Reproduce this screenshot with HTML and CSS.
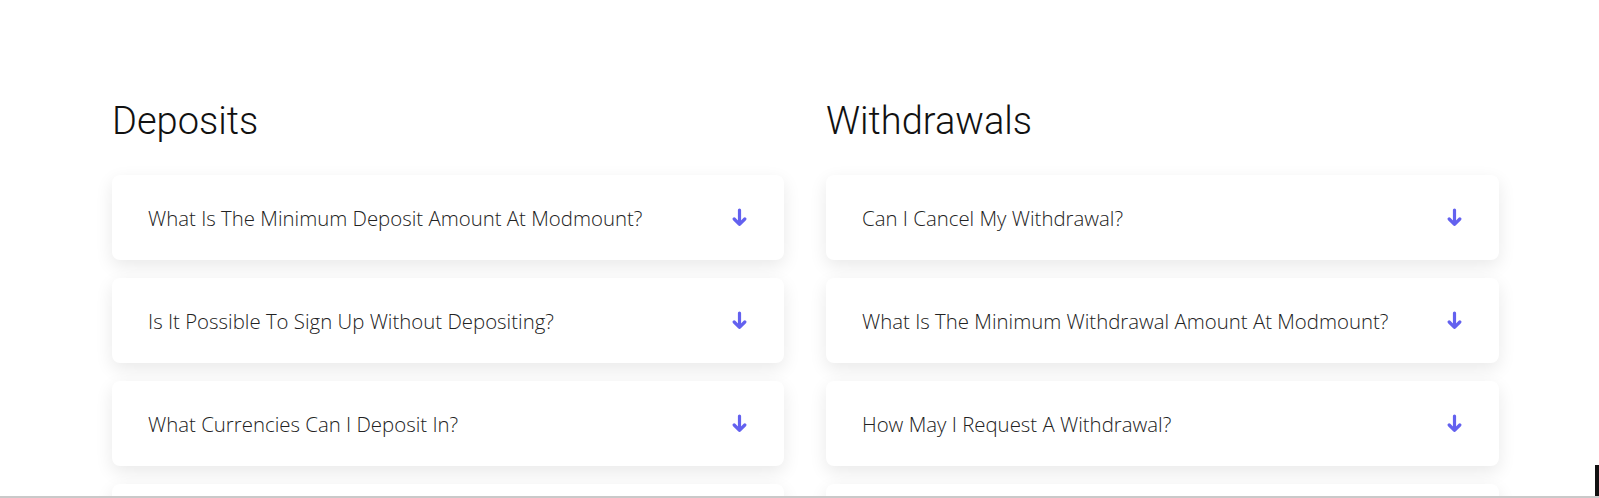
FILE: index.html
```html
<!DOCTYPE html>
<html lang="en">
<head>
<meta charset="utf-8">
<title>FAQ</title>
<link rel="stylesheet" href="styles.css">
</head>
<body>
<main class="faq">
  <section class="faq-col">
    <h2 class="faq-title">Deposits</h2>
    <div class="faq-list">
      <div class="faq-item"><span class="faq-q">What Is The Minimum Deposit Amount At Modmount?</span><svg class="faq-icon" viewBox="0 0 15 19"><path d="M7.5 2V16.2M2.2 11L7.5 16.3L12.8 11" /></svg></div>
      <div class="faq-item"><span class="faq-q">Is It Possible To Sign Up Without Depositing?</span><svg class="faq-icon" viewBox="0 0 15 19"><path d="M7.5 2V16.2M2.2 11L7.5 16.3L12.8 11" /></svg></div>
      <div class="faq-item"><span class="faq-q">What Currencies Can I Deposit In?</span><svg class="faq-icon" viewBox="0 0 15 19"><path d="M7.5 2V16.2M2.2 11L7.5 16.3L12.8 11" /></svg></div>
      <div class="faq-item"><span class="faq-q">How Long Does A Deposit Take?</span><svg class="faq-icon" viewBox="0 0 15 19"><path d="M7.5 2V16.2M2.2 11L7.5 16.3L12.8 11" /></svg></div>
    </div>
  </section>
  <section class="faq-col">
    <h2 class="faq-title">Withdrawals</h2>
    <div class="faq-list">
      <div class="faq-item"><span class="faq-q">Can I Cancel My Withdrawal?</span><svg class="faq-icon" viewBox="0 0 15 19"><path d="M7.5 2V16.2M2.2 11L7.5 16.3L12.8 11" /></svg></div>
      <div class="faq-item"><span class="faq-q">What Is The Minimum Withdrawal Amount At Modmount?</span><svg class="faq-icon" viewBox="0 0 15 19"><path d="M7.5 2V16.2M2.2 11L7.5 16.3L12.8 11" /></svg></div>
      <div class="faq-item"><span class="faq-q">How May I Request A Withdrawal?</span><svg class="faq-icon" viewBox="0 0 15 19"><path d="M7.5 2V16.2M2.2 11L7.5 16.3L12.8 11" /></svg></div>
      <div class="faq-item"><span class="faq-q">How Long Does A Withdrawal Take?</span><svg class="faq-icon" viewBox="0 0 15 19"><path d="M7.5 2V16.2M2.2 11L7.5 16.3L12.8 11" /></svg></div>
    </div>
  </section>
</main>
<div class="window-edge"></div>
<div class="cursor-bar"></div>
</body>
</html>
```
FILE: styles.css
```css
html, body {
  margin: 0;
  padding: 0;
  background: #ffffff;
  overflow: hidden;
}
body {
  font-family: "Open Sans", "Liberation Sans", sans-serif;
  color: #222222;
}
.faq {
  display: grid;
  grid-template-columns: 672px 673px;
  column-gap: 42px;
  padding: 99px 100px 0 112px;
}
.faq-title {
  margin: 0 0 31px 0;
  font-family: Roboto, "Liberation Sans", sans-serif;
  font-weight: 300;
  font-size: 38px;
  line-height: 45px;
  color: #111111;
}
.faq-list {
  display: flex;
  flex-direction: column;
  gap: 18px;
}
.faq-item {
  display: flex;
  align-items: center;
  justify-content: space-between;
  height: 85px;
  padding: 0 37px 0 36px;
  background: #ffffff;
  border-radius: 8px;
  box-shadow: 0 6px 18px rgba(0, 0, 0, 0.09);
}
.faq-q {
  font-size: 20.4px;
  font-weight: 300;
  color: #222222;
}
.faq-icon {
  width: 15px;
  height: 19px;
  fill: none;
  stroke: #6361ef;
  stroke-width: 3.2;
  stroke-linecap: round;
  stroke-linejoin: round;
}
.window-edge {
  position: fixed;
  left: 0;
  right: 0;
  bottom: 0;
  height: 2px;
  background: #c9c9c9;
}
.cursor-bar {
  position: fixed;
  right: 0;
  bottom: 2px;
  width: 4px;
  height: 31px;
  background: #111111;
}
```
